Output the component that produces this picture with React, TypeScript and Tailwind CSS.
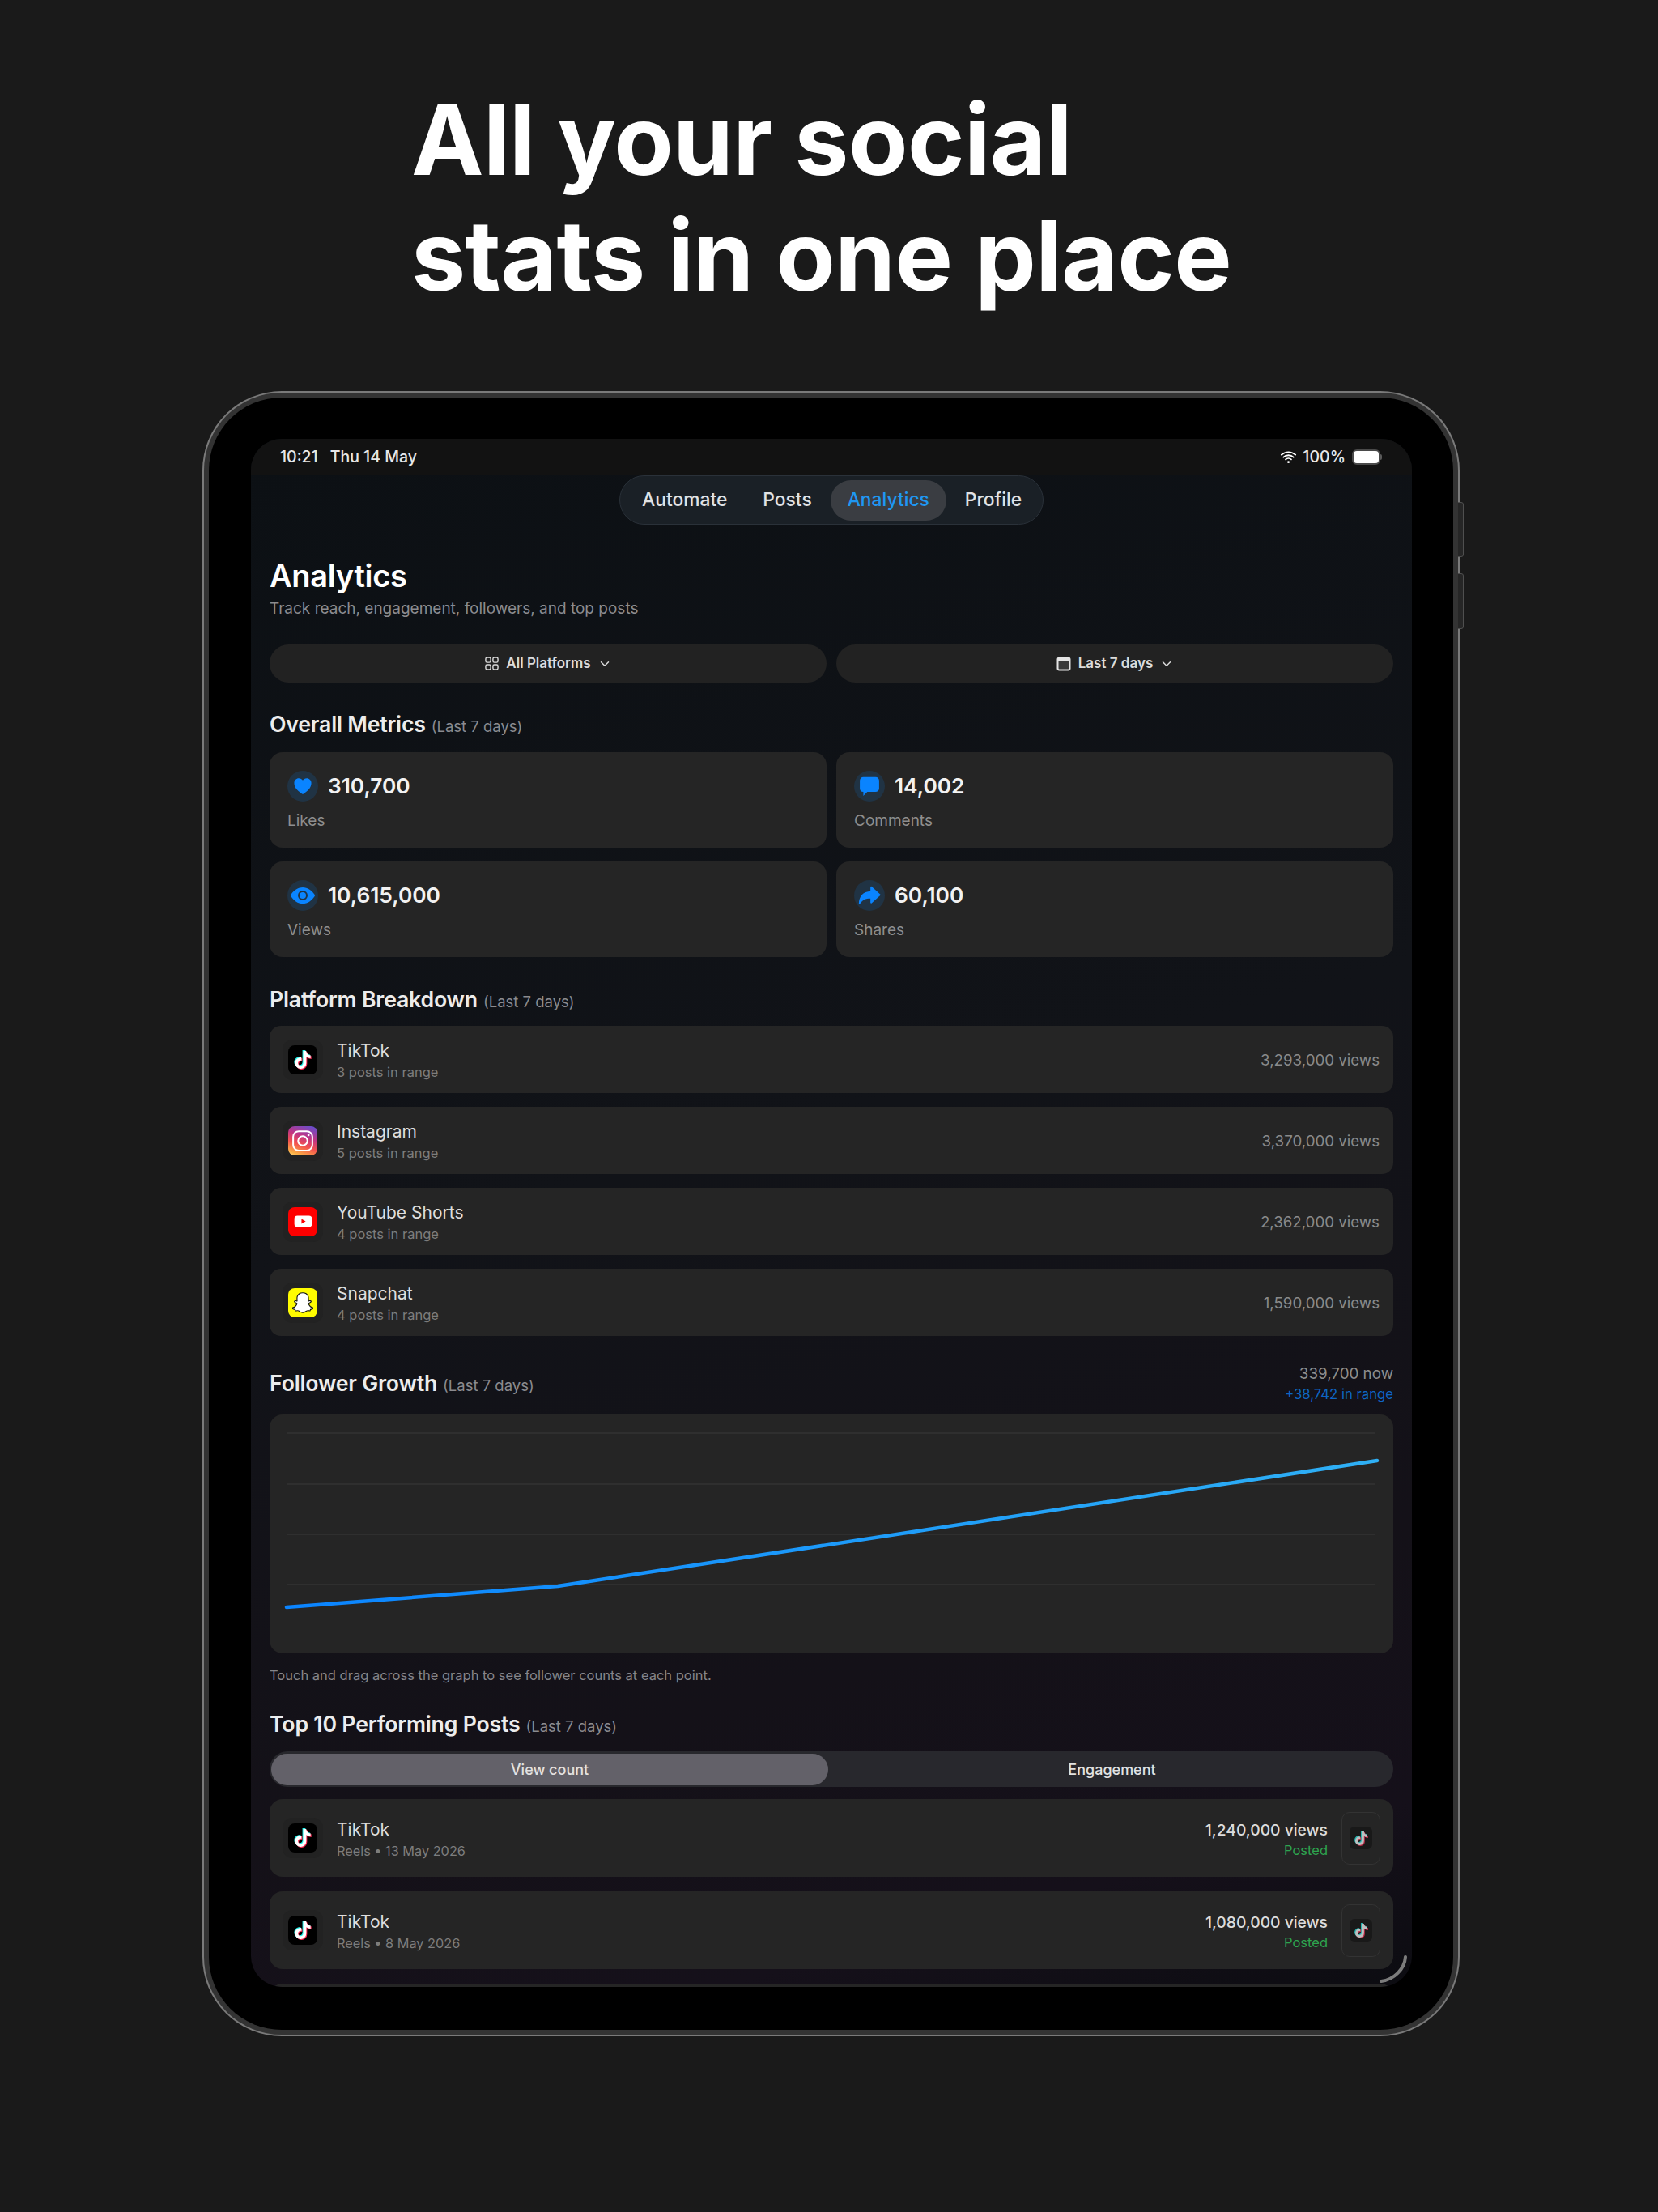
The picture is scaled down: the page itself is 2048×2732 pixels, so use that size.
import type { ReactNode } from "react";
import { FaTiktok, FaSnapchatGhost } from "react-icons/fa";
import { IoChevronDown, IoEye, IoHeart, IoWifi } from "react-icons/io5";

const metrics = [
    [
        { value: "310,700", label: "Likes", icon: <IoHeart className="h-[26px] w-[26px]" /> },
        { value: "14,002", label: "Comments", icon: <CommentIcon /> },
    ],
    [
        { value: "10,615,000", label: "Views", icon: <IoEye className="h-[32px] w-[32px]" /> },
        { value: "60,100", label: "Shares", icon: <ShareIcon /> },
    ],
];

const platforms = [
    { name: "TikTok", posts: "3 posts in range", views: "3,293,000 views", icon: <TikTokTile /> },
    { name: "Instagram", posts: "5 posts in range", views: "3,370,000 views", icon: <InstagramTile /> },
    { name: "YouTube Shorts", posts: "4 posts in range", views: "2,362,000 views", icon: <YouTubeTile /> },
    { name: "Snapchat", posts: "4 posts in range", views: "1,590,000 views", icon: <SnapchatTile /> },
];

const topPosts = [
    { sub: "Reels • 13 May 2026", views: "1,240,000 views" },
    { sub: "Reels • 8 May 2026", views: "1,080,000 views" },
];

function CommentIcon() {
    return (
        <svg viewBox="0 0 24 24" className="h-[26px] w-[26px]" fill="currentColor">
            <path d="M5 1.5h14a4 4 0 0 1 4 4v9a4 4 0 0 1-4 4h-9.5L5 23v-4.6a4 4 0 0 1-4-3.9v-9a4 4 0 0 1 4-4Z" />
        </svg>
    );
}

function ShareIcon() {
    return (
        <svg viewBox="0 0 24 24" className="h-[28px] w-[28px]" fill="currentColor">
            <path d="M13 3.2c0-.7.8-1 1.3-.6l9 8.1c.4.3.4.9 0 1.2l-9 8.2c-.5.4-1.3.1-1.3-.6v-4.3c-5 0-8.700 1.600-11.300 6-.3.500-1 .300-1-.300C.9 12.600 5.500 7.900 13 7.500V3.200Z" />
        </svg>
    );
}

function TikTokGlyph({ size }: { size: string }) {
    return (
        <span className={`relative block ${size}`}>
            <FaTiktok className="absolute left-[-1px] top-[-1px] h-full w-full text-[#25f4ee]" />
            <FaTiktok className="absolute left-[1px] top-[1px] h-full w-full text-[#fe2c55]" />
            <FaTiktok className="absolute left-0 top-0 h-full w-full text-white" />
        </span>
    );
}

function TikTokTile() {
    return (
        <div className="flex h-[36px] w-[36px] items-center justify-center rounded-[8px] bg-black">
            <TikTokGlyph size="h-[22px] w-[22px]" />
        </div>
    );
}

function InstagramTile() {
    return (
        <div className="flex h-[36px] w-[36px] items-center justify-center rounded-[8px] bg-[linear-gradient(200deg,#5b51d8_0%,#c13584_38%,#f2514f_62%,#fcaf45_88%,#ffdc80_100%)]">
            <svg viewBox="0 0 24 24" className="h-[30px] w-[30px]" fill="none" stroke="white" strokeWidth="1.6">
                <rect x="2.500" y="2.500" width="19" height="19" rx="5.500" />
                <circle cx="12" cy="12" r="4.600" />
                <circle cx="17.700" cy="6.300" r="1.100" fill="white" stroke="none" />
            </svg>
        </div>
    );
}

function YouTubeTile() {
    return (
        <div className="flex h-[36px] w-[36px] items-center justify-center rounded-[8px] bg-[#fe0000]">
            <svg viewBox="0 0 24 18" className="h-[17px] w-[23px]">
                <rect x="0.500" y="1.500" width="23" height="15" rx="4" fill="white" />
                <path d="M9.800 5.800 15.300 9l-5.500 3.200Z" fill="#fe0000" />
            </svg>
        </div>
    );
}

function SnapchatTile() {
    return (
        <div className="flex h-[36px] w-[36px] items-center justify-center rounded-[8px] bg-[#fffc00]">
            <FaSnapchatGhost className="h-[26px] w-[26px] text-white" stroke="#111" strokeWidth={22} />
        </div>
    );
}

function IconWell({ children }: { children: ReactNode }) {
    return (
        <div className="flex h-[50px] w-[50px] shrink-0 items-center justify-center rounded-[12px] bg-[#222222]">
            {children}
        </div>
    );
}

function SectionTitle({ title }: { title: string }) {
    return (
        <h2 className="flex h-[36px] items-baseline gap-[7px] text-[26.700px] leading-[36px] font-semibold tracking-[-0.2px] text-[#ececec]">
            {title}
            <span className="text-[18.500px] font-normal tracking-normal text-[#8b8b8f]">(Last 7 days)</span>
        </h2>
    );
}

function MetricCard({ value, label, icon }: { value: string; label: string; icon: ReactNode }) {
    return (
        <div className="flex-1 rounded-[16px] bg-[#252525] pl-[22px] pt-[23px]">
            <div className="flex items-center gap-[12px]">
                <div className="flex h-[38px] w-[38px] items-center justify-center rounded-full bg-[#203344] text-[#0a84ff]">
                    {icon}
                </div>
                <span className="text-[26.300px] leading-[38px] font-semibold text-[#f2f2f2]">{value}</span>
            </div>
            <div className="mt-[11px] text-[19px] leading-[26px] text-[#8e8e8e]">{label}</div>
        </div>
    );
}

function FilterPill({ icon, label }: { icon: ReactNode; label: string }) {
    return (
        <div className="flex h-[47px] flex-1 items-center justify-center gap-[9px] rounded-full bg-[#222222] text-[#dcdcdc]">
            {icon}
            <span className="text-[17px] font-semibold">{label}</span>
            <IoChevronDown className="h-[16px] w-[16px]" strokeWidth={60} />
        </div>
    );
}

function FollowerChart() {
    return (
        <svg viewBox="0 0 1388 295" className="block h-full w-full" fill="none">
            <defs>
                <linearGradient id="growth" gradientUnits="userSpaceOnUse" x1="21" y1="0" x2="1368" y2="0">
                    <stop offset="0" stopColor="#0a84ff" />
                    <stop offset="1" stopColor="#2fb0f5" />
                </linearGradient>
            </defs>
            {[23, 86, 148, 210].map((y) => (
                <line key={y} x1="21" x2="1366" y1={y} y2={y} stroke="#333333" strokeWidth="1.500" />
            ))}
            <polyline
                points="21,238 356,212 1368,57"
                stroke="url(#growth)"
                strokeWidth="4.500"
                strokeLinecap="round"
                strokeLinejoin="round"
            />
        </svg>
    );
}

export default function App() {
    return (
        <div className="h-[2732px] w-[2048px] overflow-hidden bg-[#1a1a1a] font-[family-name:Inter,sans-serif]">
            <h1 className="pl-[508px] pt-[101px] text-[120px] leading-[143px] font-bold tracking-[-0.6px] text-white">
                All your social
                <br />
                stats in one place
            </h1>

            {/* device frame */}
            <div className="relative ml-[250px] mt-[96px] w-[1553px] rounded-[98px] bg-[#7a7a7a] p-[2px]">
                <div className="absolute right-[-5px] top-[137px] h-[68px] w-[8px] rounded-r-[3px] border border-[#4f4f4f] bg-[#262626]" />
                <div className="absolute right-[-5px] top-[225px] h-[69px] w-[8px] rounded-r-[3px] border border-[#4f4f4f] bg-[#262626]" />
                <div className="relative rounded-[96px] bg-[#333333] p-[6px]">
                    <div className="rounded-[90px] bg-black pb-[53px] pl-[52px] pr-[51px] pt-[51px]">
                        <div className="relative h-[1912px] overflow-hidden rounded-[38px] bg-[linear-gradient(165deg,#0c1014_0%,#111318_45%,#141118_75%,#15101a_90%,#0c0c11_100%)]">
                            <div className="flex h-[45px] items-center justify-between bg-[#121212] pl-[36px] pr-[37px] text-[19.500px] font-medium text-[#e8e8e8]">
                                <div className="flex gap-[15px]">
                                    <span>10:21</span>
                                    <span>Thu 14 May</span>
                                </div>
                                <div className="flex items-center gap-[6px]">
                                    <IoWifi className="h-[23px] w-[23px] text-white" />
                                    <span>100%</span>
                                    <div className="ml-[2px] flex items-center">
                                        <div className="h-[19px] w-[35px] rounded-[6px] border-[2.500px] border-[#4a4a4a] bg-white" />
                                        <div className="h-[7px] w-[2px] rounded-r-full bg-[#5a5a5a]" />
                                    </div>
                                </div>
                            </div>

                            <div className="px-[23px]">
                                <div className="flex justify-center">
                                    <nav className="flex h-[61px] w-[524px] items-center gap-[2px] rounded-full border border-[#2a3139] bg-[#1a2026] pl-[6px] text-[22.800px] font-medium text-[#e0e2e4]">
                                        <span className="px-[21px]">Automate</span>
                                        <span className="px-[21px]">Posts</span>
                                        <span className="flex h-[50px] items-center rounded-full bg-[#3a3d42] px-[21px] text-[#1f97f2]">
                                            Analytics
                                        </span>
                                        <span className="px-[21px]">Profile</span>
                                    </nav>
                                </div>

                                <h1 className="mt-[40px] text-[38px] leading-[46px] font-semibold tracking-[-0.3px] text-white">
                                    Analytics
                                </h1>
                                <p className="mt-[5px] text-[19px] leading-[26px] text-[#8b8b8f]">
                                    Track reach, engagement, followers, and top posts
                                </p>

                                <div className="mt-[31px] flex gap-[12px]">
                                    <FilterPill
                                        label="All Platforms"
                                        icon={
                                            <svg viewBox="0 0 18 18" className="h-[17px] w-[17px]" fill="none" stroke="currentColor" strokeWidth="1.500">
                                                <rect x="1" y="1" width="6.500" height="6.500" rx="1.800" />
                                                <rect x="10.500" y="1" width="6.500" height="6.500" rx="1.800" />
                                                <rect x="1" y="10.500" width="6.500" height="6.500" rx="1.800" />
                                                <rect x="10.500" y="10.500" width="6.500" height="6.500" rx="1.800" />
                                            </svg>
                                        }
                                    />
                                    <FilterPill
                                        label="Last 7 days"
                                        icon={
                                            <svg viewBox="0 0 18 18" className="h-[18px] w-[18px]">
                                                <rect x="0.500" y="0.500" width="17" height="17" rx="3" fill="#e4e4e4" />
                                                <rect x="2.500" y="5" width="13" height="10.500" rx="1" fill="#3a3a3a" />
                                            </svg>
                                        }
                                    />
                                </div>

                                <div className="mt-[33px]">
                                    <SectionTitle title="Overall Metrics" />
                                </div>
                                <div className="mt-[17px] flex flex-col gap-[17px]">
                                    {metrics.map((row) => (
                                        <div key={row[0].label} className="flex h-[118px] gap-[12px]">
                                            {row.map((m) => (
                                                <MetricCard key={m.label} value={m.value} label={m.label} icon={m.icon} />
                                            ))}
                                        </div>
                                    ))}
                                </div>

                                <div className="mt-[34px]">
                                    <SectionTitle title="Platform Breakdown" />
                                </div>
                                <div className="mt-[15px] flex flex-col gap-[17px]">
                                    {platforms.map((p) => (
                                        <div key={p.name} className="flex h-[83px] items-center rounded-[14px] bg-[#252525] pl-[16px] pr-[17px]">
                                            <IconWell>{p.icon}</IconWell>
                                            <div className="ml-[17px] flex-1 pt-[2px]">
                                                <div className="text-[21px] leading-[28px] text-[#dedede]">{p.name}</div>
                                                <div className="text-[16.500px] leading-[24px] text-[#7d7d7d]">{p.posts}</div>
                                            </div>
                                            <span className="pt-[3px] text-[18.700px] text-[#8a8a8a]">{p.views}</span>
                                        </div>
                                    ))}
                                </div>

                                <div className="mt-[33px] flex h-[51px] items-center justify-between">
                                    <div className="mb-[2px]">
                                        <SectionTitle title="Follower Growth" />
                                    </div>
                                    <div className="text-right">
                                        <div className="text-[18.800px] leading-[26px] text-[#8e8e8e]">339,700 now</div>
                                        <div className="text-[16.700px] leading-[24px] text-[#0e66c4]">+38,742 in range</div>
                                    </div>
                                </div>
                                <div className="mt-[13px] h-[295px] rounded-[16px] bg-[#252525]">
                                    <FollowerChart />
                                </div>
                                <p className="mt-[16px] text-[16.500px] leading-[22px] text-[#85858a]">
                                    Touch and drag across the graph to see follower counts at each point.
                                </p>

                                <div className="mt-[31px]">
                                    <SectionTitle title="Top 10 Performing Posts" />
                                </div>
                                <div className="mt-[16px] flex h-[44px] items-center rounded-full bg-[#28282d] p-[2px] text-[18px] font-medium text-[#e2e2e2]">
                                    <div className="flex h-[39px] w-[688px] items-center justify-center rounded-full bg-[#636169]">View count</div>
                                    <div className="flex-1 pl-[5px] text-center">Engagement</div>
                                </div>

                                <div className="mt-[15px] flex flex-col gap-[18px]">
                                    {topPosts.map((post) => (
                                        <div key={post.sub} className="flex h-[96px] items-center rounded-[16px] bg-[#252525] pl-[16px] pr-[16px]">
                                            <IconWell>
                                                <TikTokTile />
                                            </IconWell>
                                            <div className="ml-[17px] flex-1 pt-[3px]">
                                                <div className="text-[21px] leading-[28px] text-[#dedede]">TikTok</div>
                                                <div className="text-[16.300px] leading-[24px] text-[#7d7d7d]">{post.sub}</div>
                                            </div>
                                            <div className="pt-[3px] text-right">
                                                <div className="text-[19.300px] leading-[26px] font-medium text-[#dcdcdc]">{post.views}</div>
                                                <div className="text-[16.500px] leading-[24px] text-[#2ea44f]">Posted</div>
                                            </div>
                                            <div className="ml-[17px] flex h-[65px] w-[48px] items-center justify-center rounded-[10px] border border-[#333333]">
                                                <div className="flex h-[28px] w-[28px] items-center justify-center rounded-[6px] bg-[#151515] opacity-70">
                                                    <TikTokGlyph size="h-[17px] w-[17px]" />
                                                </div>
                                            </div>
                                        </div>
                                    ))}
                                    <div className="h-[96px] rounded-[16px] bg-[#252525]" />
                                </div>
                            </div>

                            {/* scroll corner indicator */}
                            <svg viewBox="0 0 34 34" className="absolute bottom-[5px] right-[6px] h-[34px] w-[34px]" fill="none">
                                <path d="M32 2C31 17 18 30 2 32" stroke="#7c7c7c" strokeWidth="4" strokeLinecap="round" />
                            </svg>
                        </div>
                    </div>
                </div>
            </div>
        </div>
    );
}
